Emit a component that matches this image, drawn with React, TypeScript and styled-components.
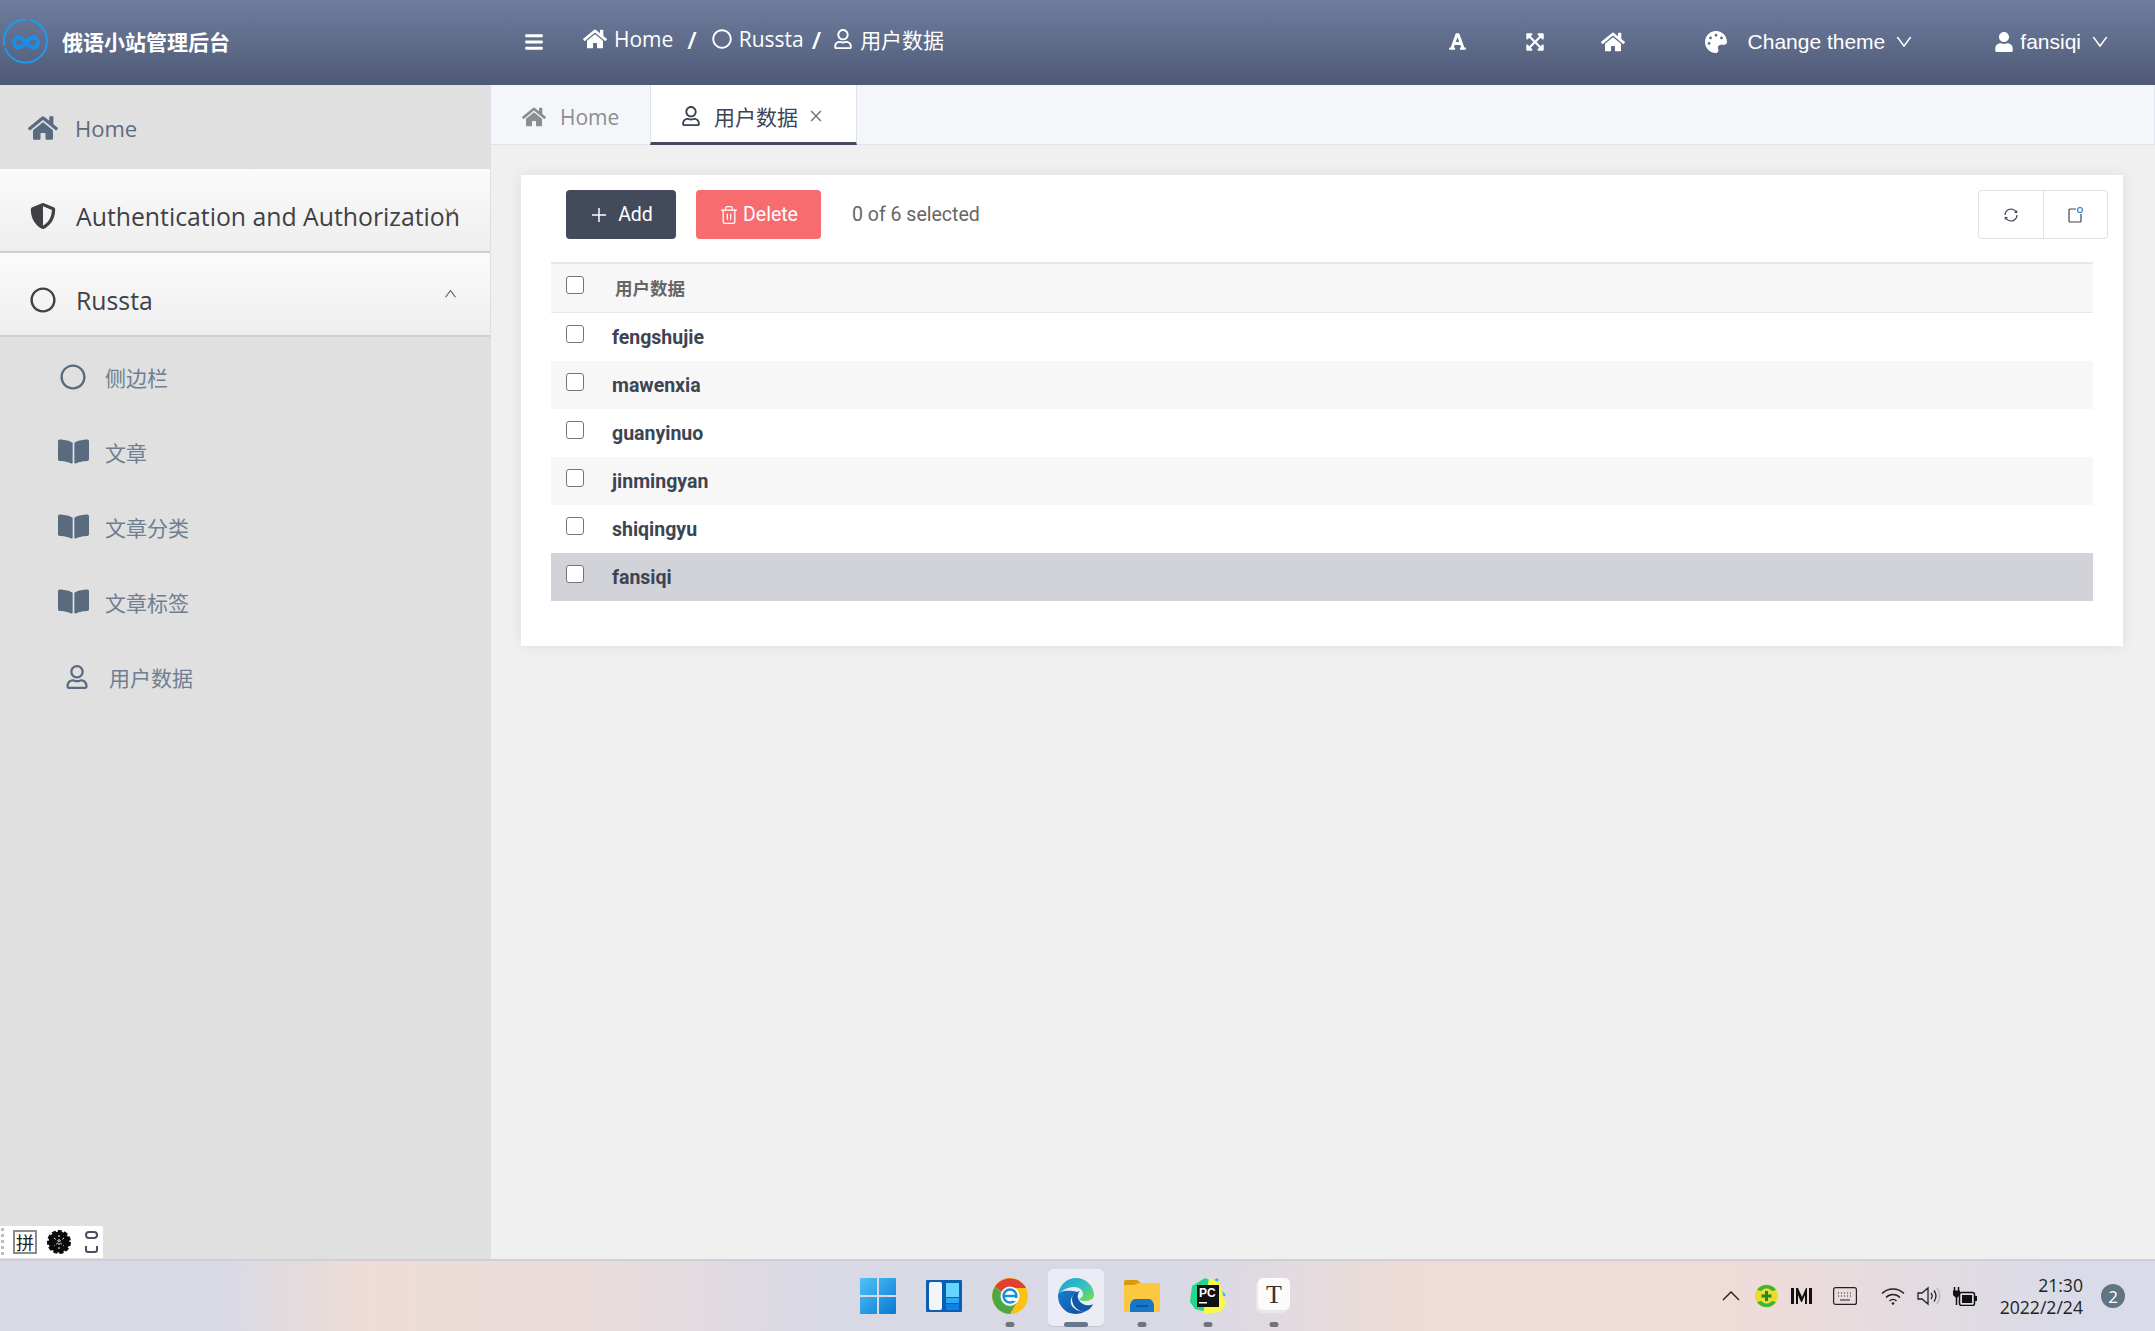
import React from "react";
import styled, { createGlobalStyle } from "styled-components";
import {
  FaBars, FaBookOpen, FaExpandArrowsAlt, FaFont, FaHome, FaPalette,
  FaRegCircle, FaRegUser, FaShieldAlt, FaUser,
} from "react-icons/fa";
import {
  AiOutlineClose, AiOutlineDown, AiOutlinePlus, AiOutlineSync, AiOutlineUp,
} from "react-icons/ai";
import { Trash2 } from "lucide-react";

const Global = createGlobalStyle`
  html, body { margin: 0; padding: 0; background: #f0f0f0; }
  * { box-sizing: border-box; }
`;

const Shell = styled.div`
  position: relative;
  width: 2155px;
  height: 1331px;
  overflow: hidden;
  display: grid;
  grid-template-rows: 85px 1174px 72px;
  font-family: "Open Sans", "Noto Sans CJK SC", sans-serif;
`;

const Header = styled.header`
  display: flex;
  align-items: center;
  color: #fff;
  background: linear-gradient(180deg, #6f7e9f 0%, #4e5a75 100%);
  font-family: "Liberation Sans", "Noto Sans CJK SC", sans-serif;
`;
const Brand = styled.div`
  width: 524px;
  display: flex;
  align-items: center;
  gap: 14px;
  padding-left: 3px;
  margin-top: -3px;
  font-size: 21px;
  font-weight: 700;
  font-family: "Noto Sans CJK SC", sans-serif;
`;
const MenuToggle = styled.span`
  display: inline-flex;
  margin-top: -2px;
`;
const Crumbs = styled.nav`
  display: flex;
  align-items: center;
  font-size: 21px;
  margin-left: 39px;
  margin-top: -7px;
  font-family: "Open Sans", "Noto Sans CJK SC", sans-serif;
`;
const CrumbItem = styled.span`
  display: inline-flex;
  align-items: center;
  gap: 7px;
`;
const Slash = styled.span<{ $before: number; $after: number }>`
  margin: 0 ${(p) => p.$after}px 0 ${(p) => p.$before}px;
  font-size: 24px;
  font-weight: 600;
`;
const HeaderTools = styled.div`
  margin-left: auto;
  margin-top: -2px;
  display: flex;
  align-items: center;
  padding-right: 45px;
  font-size: 21px;
`;
const ToolIcon = styled.span<{ $gap: number }>`
  display: inline-flex;
  margin-left: ${(p) => p.$gap}px;
`;
const ToolText = styled.span<{ $gap: number }>`
  margin-left: ${(p) => p.$gap}px;
`;

const Body = styled.div`
  display: grid;
  grid-template-columns: 491px 1fr;
  min-height: 0;
`;
const Sidebar = styled.aside`
  background: #e0e0e0;
  border-right: 1px solid #dcdfe6;
`;
const HomeRow = styled.div`
  position: relative;
  height: 84px;
  display: flex;
  align-items: center;
  padding: 2px 0 0 28px;
  gap: 17px;
  font-size: 22px;
  color: #5a6b80;
`;
const GroupRow = styled.div`
  position: relative;
  height: 84px;
  display: flex;
  align-items: center;
  padding: 12px 0 0 30px;
  gap: 20px;
  font-size: 24.8px;
  color: #3f4145;
  white-space: nowrap;
  background: linear-gradient(180deg, #fbfbfb 0%, #eeeeee 100%);
  border-bottom: 2px solid #cfcfcf;
`;
const Chevron = styled.span<{ $top: number }>`
  position: absolute;
  right: 32px;
  top: ${(p) => p.$top}px;
  display: inline-flex;
  color: #6e6e6e;
`;
const SubMenu = styled.div`
  padding-top: 2px;
`;
const SubItem = styled.div<{ $pad: number; $gap: number }>`
  height: 75px;
  display: flex;
  align-items: center;
  padding-left: ${(p) => p.$pad}px;
  gap: ${(p) => p.$gap}px;
  font-size: 21px;
  color: #6f7e90;
  svg { color: #5a6b80; }
`;

const Main = styled.main`
  display: flex;
  flex-direction: column;
  min-width: 0;
`;
const Tabs = styled.div`
  height: 60px;
  display: flex;
  background: #f4f6fa;
  border-bottom: 1px solid #e0e4ec;
  border-right: 1px solid #e0e4ec;
`;
const HomeTab = styled.div`
  width: 159px;
  display: flex;
  align-items: center;
  gap: 14px;
  padding: 4px 0 0 31px;
  font-size: 21px;
  color: #8a8d92;
`;
const ActiveTab = styled.div`
  width: 207px;
  height: 60px;
  display: flex;
  align-items: center;
  padding: 4px 0 0 30px;
  gap: 13px;
  font-size: 21px;
  color: #3d4454;
  background: #fff;
  border-left: 1px solid #dfe3ea;
  border-right: 1px solid #dfe3ea;
  border-bottom: 3px solid #434a5c;
`;
const TabClose = styled.span`
  display: inline-flex;
  margin-left: -3px;
  color: #6b6f78;
`;
const Content = styled.div`
  padding: 30px 32px 0 30px;
`;
const Card = styled.section`
  height: 471px;
  background: #fff;
  padding: 15px 30px;
  box-shadow: 0 0 14px rgba(0, 0, 0, 0.08);
`;
const Toolbar = styled.div`
  height: 49px;
  display: flex;
  align-items: center;
  padding-left: 15px;
  margin-right: -15px;
`;
const ActionButton = styled.button<{ $bg: string; $w: number; $gap: number }>`
  width: ${(p) => p.$w}px;
  height: 49px;
  border: 0;
  border-radius: 4px;
  background: ${(p) => p.$bg};
  color: #fff;
  display: inline-flex;
  align-items: center;
  justify-content: center;
  gap: ${(p) => p.$gap}px;
  font: 400 19.5px Roboto, sans-serif;
  margin-right: 20px;
  padding: 0;
`;
const Selected = styled.span`
  margin-left: 11px;
  font: 400 19.5px Roboto, sans-serif;
  color: #666;
`;
const ToolGroup = styled.div`
  margin-left: auto;
  width: 130px;
  height: 49px;
  display: grid;
  grid-template-columns: 1fr 1fr;
  border: 1px solid #dfe0e8;
  border-radius: 4px;
`;
const ToolCell = styled.span`
  display: flex;
  align-items: center;
  justify-content: center;
  color: #3d4454;
  & + & { border-left: 1px solid #dfe0e8; }
`;
const Table = styled.div`
  margin-top: 23px;
  border-top: 2px solid #e8e8e8;
  font-family: Roboto, "Noto Sans CJK SC", sans-serif;
`;
const HeadRow = styled.div`
  height: 49px;
  display: flex;
  padding: 12px 0 0 15px;
  background: #f7f7f7;
  border-bottom: 1px solid #e8e8e8;
  font-size: 17.5px;
  font-weight: 700;
  color: #666;
`;
const Row = styled.div<{ $tone: "plain" | "odd" | "active" }>`
  height: 48px;
  display: flex;
  padding: 12px 0 0 15px;
  font-size: 19.5px;
  font-weight: 700;
  color: #3d4454;
  background: ${(p) => (p.$tone === "active" ? "#d1d3d9" : p.$tone === "odd" ? "#f7f7f7" : "#fff")};
`;
const Check = styled.span`
  width: 18px;
  height: 18px;
  flex: none;
  background: #fff;
  border: 1.5px solid #767676;
  border-radius: 3px;
`;
const RowText = styled.span<{ $left: number }>`
  margin-left: ${(p) => p.$left}px;
  line-height: 22px;
  margin-top: 2px;
`;

const Ime = styled.div`
  position: absolute;
  left: 0;
  top: 1226px;
  width: 103px;
  height: 32px;
  background: #fff;
  display: flex;
  align-items: center;
  padding-left: 13px;
  gap: 10px;
  &::before {
    content: "";
    position: absolute;
    left: 1px;
    top: 2px;
    bottom: 2px;
    width: 3px;
    background: repeating-linear-gradient(180deg, #bdbdbd 0 3px, transparent 3px 6px);
  }
`;
const ImeKey = styled.span`
  width: 24px;
  height: 24px;
  border: 2px solid #8c8c8c;
  display: flex;
  align-items: center;
  justify-content: center;
  font: 400 18px "Noto Sans CJK SC", sans-serif;
  color: #222;
`;
const ImeCrop = styled.span`
  display: inline-flex;
  margin-left: 4px;
`;

const Taskbar = styled.footer`
  display: grid;
  grid-template-columns: 844.5px auto 1fr;
  align-items: center;
  border-top: 2px solid #cfcfd8;
  background: linear-gradient(90deg, #d8d9e5 0%, #d8d9e5 10%, #eeddd6 17%, #e9dcdc 28%, #d9d9e5 38%, #d9d9e5 55%, #eedcd6 66%, #efdcd8 80%, #dadbe8 96%, #d9dbe8 100%);
`;
const Apps = styled.div`
  display: flex;
`;
const AppSlot = styled.div<{ $active?: boolean }>`
  position: relative;
  width: 66px;
  height: 70px;
  display: flex;
  align-items: center;
  justify-content: center;
  &::before {
    content: "";
    display: ${(p) => (p.$active ? "block" : "none")};
    position: absolute;
    left: 5px;
    right: 5px;
    top: 8px;
    bottom: 4px;
    background: #ecedf4;
    border-radius: 6px;
    border-bottom: 1px solid #c4c5d0;
  }
  svg { position: relative; }
`;
const AppDot = styled.span<{ $active?: boolean }>`
  position: absolute;
  left: 50%;
  bottom: 4px;
  transform: translateX(-50%);
  width: ${(p) => (p.$active ? 24 : 9)}px;
  height: 5px;
  border-radius: 3px;
  background: ${(p) => (p.$active ? "#66798a" : "#6f7479")};
`;
const Tray = styled.div`
  display: flex;
  align-items: center;
  justify-content: flex-end;
  padding-right: 30px;
  color: #1a1a1a;
`;
const TrayItem = styled.span<{ $gap: number }>`
  display: inline-flex;
  margin-left: ${(p) => p.$gap}px;
`;
const Clock = styled.div`
  margin-left: 22.5px;
  text-align: right;
  font-size: 17.6px;
  line-height: 22px;
  color: #222;
`;
const Badge = styled.span`
  margin-left: 18px;
  width: 24px;
  height: 24px;
  border-radius: 50%;
  background: #5f7584;
  color: #fff;
  font-size: 17px;
  display: flex;
  align-items: center;
  justify-content: center;
`;

const Logo = () => (
  <svg width="45" height="45" viewBox="0 0 45 45" fill="none">
    <circle cx="22.500" cy="22" r="21.500" stroke="#1c9bf0" strokeWidth="2" strokeDasharray="60 2 40 3 29" />
    <path d="M23 23.500c-3-3.500-4.500-5-7-5a5 5 0 0 0 0 10c2.500 0 4-1.500 7-5s4.500-5 7-5a5 5 0 0 1 0 10c-2.500 0-4-1.500-7-5z" stroke="#1a8fe8" strokeWidth="4" />
  </svg>
);

const ColumnIcon = () => (
  <svg width="17" height="16" viewBox="0 0 17 16" fill="none" stroke="#3d4454" strokeWidth="1.200">
    <path d="M9 2H3a2 2 0 0 0-1 .5V14a1 1 0 0 0 1 1h10a1 1 0 0 0 1-1V7" />
    <circle cx="13" cy="3" r="2.500" stroke="#2f86d6" />
  </svg>
);

const WinIcon = () => (
  <svg width="36" height="36" viewBox="0 0 36 36">
    <defs>
      <linearGradient id="w1" x1="0" y1="0" x2="1" y2="1">
        <stop offset="0" stopColor="#4fc3f7" />
        <stop offset="1" stopColor="#0a78d4" />
      </linearGradient>
    </defs>
    <path d="M1 0h16v17H0V1a1 1 0 0 1 1-1zM19 0h16a1 1 0 0 1 1 1v16H19zM0 19h17v17H1a1 1 0 0 1-1-1zM19 19h17v16a1 1 0 0 1-1 1H19z" fill="url(#w1)" />
  </svg>
);
const WidgetIcon = () => (
  <svg width="36" height="32" viewBox="0 0 36 32">
    <rect width="36" height="32" rx="1" fill="#0a5fb0" />
    <rect x="3" y="2" width="13" height="28" rx="2" fill="#f4f4f6" />
    <rect x="20" y="3" width="13" height="14" fill="#66d6ff" />
    <rect x="20" y="18" width="13" height="5" fill="#2ea8f4" />
    <rect x="20" y="24" width="13" height="6" fill="#0a84e8" />
  </svg>
);
const BrowserE = () => (
  <svg width="36" height="36" viewBox="0 0 36 36">
    <circle cx="18" cy="18" r="18" fill="#fbc213" />
    <path d="M3 8.500A18 18 0 0 1 34 10H18a8 8 0 0 0-7.500 5z" fill="#e0402f" />
    <path d="M3 8.500A18 18 0 0 0 18 36l7-12a8 8 0 0 1-14.500-8z" fill="#4da74a" />
    <circle cx="18" cy="18" r="9.500" fill="#fff" />
    <circle cx="18" cy="18" r="6.500" fill="none" stroke="#1693d6" strokeWidth="2.500" />
    <path d="M12 18h12" stroke="#1693d6" strokeWidth="2.500" />
    <path d="M21 21.500h5" stroke="#fff" strokeWidth="3" />
  </svg>
);
const EdgeIcon = () => (
  <svg width="36" height="36" viewBox="0 0 36 36">
    <defs>
      <linearGradient id="e1" x1="0" y1="0" x2="1" y2="0.800">
        <stop offset="0" stopColor="#1a9fd8" />
        <stop offset="0.600" stopColor="#35c1c1" />
        <stop offset="1" stopColor="#6fdc5c" />
      </linearGradient>
      <linearGradient id="e2" x1="0" y1="0" x2="1" y2="1">
        <stop offset="0" stopColor="#1a7ecf" />
        <stop offset="1" stopColor="#0d4f9e" />
      </linearGradient>
    </defs>
    <path d="M0 17C1 7 9 0 18 0c10 0 18 8 18 17 0 4-4 6-9 6-3 0-6-1-6-2 3-1 4-3 4-5 0-4-4-7-9-7-7 0-13 4-16 8z" fill="url(#e1)" />
    <path d="M0 17c-.500 11 8 19 17 19 4 0 8-1 11-3-2 .500-8 1-12-3-5-4-4-11 1-14 2-1 3-2 3-2-9-2-18-2-20 3z" fill="url(#e2)" />
    <path d="M14 21c0 8 8 14 14 12 3-1 6-4 7-7-4 3-13 1-15-6-1-3 1-6 2-7-4 1-8 4-8 8z" fill="#0f57a8" />
  </svg>
);
const FolderIcon = () => (
  <svg width="36" height="32" viewBox="0 0 36 32">
    <path d="M0 2a2 2 0 0 1 2-2h11l4 3h-2l-5 3H0z" fill="#d99b09" />
    <path d="M0 5h10l5-2h20a1 1 0 0 1 1 1v28H0z" fill="#fcc83f" />
    <path d="M6 32v-6c0-3 2-7 5-7h14c3 0 5 4 5 7v6z" fill="#1676c7" />
    <path d="M12 26h12" stroke="#0b4e8c" strokeWidth="1.500" />
  </svg>
);
const PyCharmIcon = () => (
  <svg width="36" height="36" viewBox="0 0 36 36">
    <path d="M2 8 15 0l10 4-8 30-12-3L0 24z" fill="#21d789" />
    <path d="M22 3l6-3 1 10 7 7-8 5z" fill="#07c3f2" />
    <path d="M19 0l10 4 7 22-6 8-17 2z" fill="#fcf84a" />
    <rect x="7" y="7" width="22" height="22" fill="#111" />
    <text x="9" y="19" fontFamily="Liberation Sans" fontWeight="700" fontSize="12" fill="#fff">PC</text>
    <rect x="9" y="24" width="8" height="1.500" fill="#fff" />
  </svg>
);
const TyporaIcon = () => (
  <svg width="36" height="36" viewBox="0 0 36 36">
    <rect x="0" y="3" width="31" height="32" rx="5" fill="#e8e8e8" />
    <rect x="2" y="0" width="32" height="32" rx="5" fill="#fbfbfb" />
    <text x="18" y="25" textAnchor="middle" fontFamily="Liberation Serif" fontSize="26" fill="#333">T</text>
  </svg>
);

const ChevronUp = () => (
  <svg width="18" height="18" viewBox="0 0 18 18" fill="none" stroke="#1a1a1a" strokeWidth="1.300"><path d="M1 13 9 5l8 8" /></svg>
);
const GreenIcon = () => (
  <svg width="23" height="24" viewBox="0 0 23 24">
    <circle cx="11.500" cy="12" r="11.500" fill="#eddc2c" />
    <path d="M2 6a11.500 11.500 0 0 1 19 0l-4 1a7 7 0 0 0-11 0z" fill="#34b545" />
    <path d="M2 18a11.500 11.500 0 0 0 19 0l-4-1a7 7 0 0 1-11 0z" fill="#34b545" />
    <path d="M11.500 7v10M6.500 12h10" stroke="#1d8a2e" strokeWidth="3" />
  </svg>
);
const MIcon = () => (
  <svg width="21" height="16" viewBox="0 0 21 16" fill="#111">
    <path d="M0 0h3v16H0zM18 0h3v16h-3zM5 0h2l4 9 4-9h1v16h-2V7l-3 7H10L7 7v9H5z" />
  </svg>
);
const KeyboardIcon = () => (
  <svg width="24" height="18" viewBox="0 0 24 18" fill="none" stroke="#222" strokeWidth="1.200">
    <rect x=".6" y=".6" width="22.800" height="16.800" rx="2" />
    <path d="M5 6h1M8 6h1M11 6h1M14 6h1M17 6h1M5 9h1M8 9h1M11 9h1M14 9h1M17 9h1M7 13h10" />
  </svg>
);
const WifiIcon = () => (
  <svg width="24" height="18" viewBox="0 0 24 18" fill="none" stroke="#222" strokeWidth="1.500">
    <path d="M1 6.500C7 .5 17 .5 23 6.500M5 10.500c4-4 10-4 14 0M8.500 14c2-2 5-2 7 0" />
    <circle cx="12" cy="16.500" r="1.300" fill="#222" stroke="none" />
  </svg>
);
const VolumeIcon = () => (
  <svg width="24" height="20" viewBox="0 0 24 20" fill="none" stroke="#222" strokeWidth="1.300">
    <path d="M1 7v6h4l6 5V2L5 7z" />
    <path d="M14 7c1.500 2 1.500 4 0 6M17 4.500c2.500 3.500 2.500 7.500 0 11" />
    <path d="M20 2c3.500 5 3.500 11 0 16" stroke="#b5b5b5" />
  </svg>
);
const BatteryIcon = () => (
  <svg width="24" height="19" viewBox="0 0 24 19" fill="none">
    <rect x="6.500" y="5.500" width="15" height="13" rx="2" stroke="#111" strokeWidth="1.500" />
    <rect x="9" y="8" width="10" height="8" fill="#111" />
    <rect x="22" y="9" width="2" height="5" fill="#111" />
    <path d="M1.500 0v4M5.500 0v4" stroke="#111" strokeWidth="1.500" />
    <path d="M0 3.500h7V8L4.500 10.500h-2L0 8z" fill="#111" />
    <path d="M3.500 10v8" stroke="#111" strokeWidth="1.500" />
  </svg>
);
const ImeGear = () => (
  <svg width="24" height="24" viewBox="0 0 24 24">
    <circle cx="12" cy="12" r="10.500" fill="#0a0a0a" />
    <circle cx="12" cy="12" r="10.500" fill="none" stroke="#0a0a0a" strokeWidth="3" strokeDasharray="4 2" />
    <path d="M7 8l10 8M17 8 7 16M12 5v14" stroke="#fff" strokeWidth="1" strokeDasharray="2 2" />
  </svg>
);
const ImeCropIcon = () => (
  <svg width="13" height="24" viewBox="0 0 13 24" fill="none" stroke="#4a4f66" strokeWidth="2">
    <rect x="1" y="2" width="11" height="6" rx="3" />
    <path d="M1 16v4a2 2 0 0 0 2 2h7a2 2 0 0 0 2-2v-4" />
  </svg>
);

const users = ["fengshujie", "mawenxia", "guanyinuo", "jinmingyan", "shiqingyu", "fansiqi"];
const books = ["文章", "文章分类", "文章标签"];
const apps = [
  { el: <WinIcon /> },
  { el: <WidgetIcon /> },
  { el: <BrowserE />, dot: true },
  { el: <EdgeIcon />, active: true },
  { el: <FolderIcon />, dot: true },
  { el: <PyCharmIcon />, dot: true },
  { el: <TyporaIcon />, dot: true },
];

export default function App() {
  return (
    <Shell>
      <Global />
      <Header>
        <Brand>
          <Logo />
          俄语小站管理后台
        </Brand>
        <MenuToggle><FaBars size={20} /></MenuToggle>
        <Crumbs>
          <CrumbItem><FaHome size={24} />Home</CrumbItem>
          <Slash $before={14} $after={15}>/</Slash>
          <CrumbItem><FaRegCircle size={20} />Russta</CrumbItem>
          <Slash $before={8} $after={12}>/</Slash>
          <CrumbItem><FaRegUser size={20} />用户数据</CrumbItem>
        </Crumbs>
        <HeaderTools>
          <ToolIcon $gap={0}><FaFont size={19} /></ToolIcon>
          <ToolIcon $gap={58}><FaExpandArrowsAlt size={20} /></ToolIcon>
          <ToolIcon $gap={56}><FaHome size={24} /></ToolIcon>
          <ToolIcon $gap={80}><FaPalette size={22} /></ToolIcon>
          <ToolText $gap={21}>Change theme</ToolText>
          <ToolIcon $gap={9}><AiOutlineDown size={20} /></ToolIcon>
          <ToolIcon $gap={80}><FaUser size={20} /></ToolIcon>
          <ToolText $gap={6}>fansiqi</ToolText>
          <ToolIcon $gap={9}><AiOutlineDown size={20} /></ToolIcon>
        </HeaderTools>
      </Header>
      <Body>
        <Sidebar>
          <HomeRow><FaHome size={30} />Home</HomeRow>
          <GroupRow>
            <FaShieldAlt size={26} />
            Authentication and Authorization
            <Chevron $top={36}><AiOutlineDown size={15} /></Chevron>
          </GroupRow>
          <GroupRow>
            <FaRegCircle size={26} />
            Russta
            <Chevron $top={33}><AiOutlineUp size={15} /></Chevron>
          </GroupRow>
          <SubMenu>
            <SubItem $pad={60} $gap={19}><FaRegCircle size={26} />侧边栏</SubItem>
            {books.map((b) => (
              <SubItem key={b} $pad={58} $gap={16}><FaBookOpen size={31} />{b}</SubItem>
            ))}
            <SubItem $pad={65} $gap={20}><FaRegUser size={24} />用户数据</SubItem>
          </SubMenu>
        </Sidebar>
        <Main>
          <Tabs>
            <HomeTab><FaHome size={24} />Home</HomeTab>
            <ActiveTab>
              <FaRegUser size={20} />
              用户数据
              <TabClose><AiOutlineClose size={16} /></TabClose>
            </ActiveTab>
          </Tabs>
          <Content>
            <Card>
              <Toolbar>
                <ActionButton $bg="#434a5c" $w={110} $gap={9}><AiOutlinePlus size={20} />Add</ActionButton>
                <ActionButton $bg="#f76d6f" $w={125} $gap={4}><Trash2 size={20} strokeWidth={1.5} />Delete</ActionButton>
                <Selected>0 of 6 selected</Selected>
                <ToolGroup>
                  <ToolCell><AiOutlineSync size={16} /></ToolCell>
                  <ToolCell><ColumnIcon /></ToolCell>
                </ToolGroup>
              </Toolbar>
              <Table>
                <HeadRow><Check /><RowText $left={31}>用户数据</RowText></HeadRow>
                {users.map((u, i) => (
                  <Row key={u} $tone={i === 5 ? "active" : i % 2 ? "odd" : "plain"}>
                    <Check />
                    <RowText $left={28}>{u}</RowText>
                  </Row>
                ))}
              </Table>
            </Card>
          </Content>
        </Main>
      </Body>
      <Taskbar>
        <span />
        <Apps>
          {apps.map((a, i) => (
            <AppSlot key={i} $active={a.active}>
              {a.el}
              {(a.dot || a.active) && <AppDot $active={a.active} />}
            </AppSlot>
          ))}
        </Apps>
        <Tray>
          <TrayItem $gap={0}><ChevronUp /></TrayItem>
          <TrayItem $gap={15}><GreenIcon /></TrayItem>
          <TrayItem $gap={13}><MIcon /></TrayItem>
          <TrayItem $gap={21}><KeyboardIcon /></TrayItem>
          <TrayItem $gap={24}><WifiIcon /></TrayItem>
          <TrayItem $gap={12}><VolumeIcon /></TrayItem>
          <TrayItem $gap={12}><BatteryIcon /></TrayItem>
          <Clock>21:30<br />2022/2/24</Clock>
          <Badge>2</Badge>
        </Tray>
      </Taskbar>
      <Ime>
        <ImeKey>拼</ImeKey>
        <ImeGear />
        <ImeCrop><ImeCropIcon /></ImeCrop>
      </Ime>
    </Shell>
  );
}
